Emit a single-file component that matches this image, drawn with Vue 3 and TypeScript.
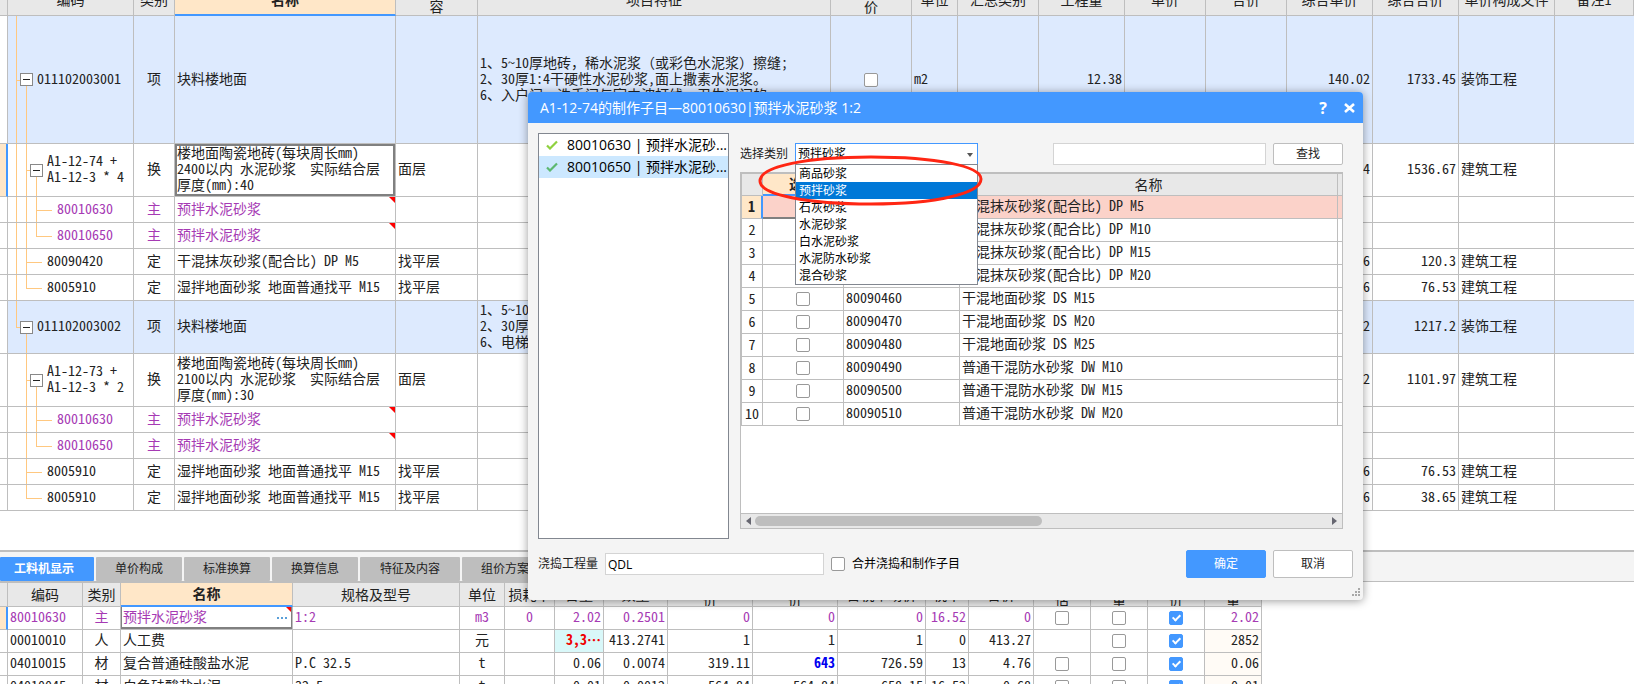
<script setup lang="ts">
import { ref } from 'vue'

type Node = 'branch' | 'leaf'

interface Item {
  level: number
  node: Node
  last?: boolean
  through: number[]
  size: 'xl' | 'lg' | 'sm'
  code: string
  kind: string
  name: string
  work?: string
  feature?: string
  bid?: boolean
  unit?: string
  qty?: string
  price?: string
  total?: string
  file?: string
  main?: boolean
  current?: boolean
}

const itemCols: number[] = [8, 126, 41, 221, 82, 353, 81, 46, 81, 86, 81, 81, 86, 86, 96]
const itemHeads: string[] = [
  '', '编码', '类别', '名称', '工作内\n容', '项目特征', '不计\n价', '单位', '汇总类别',
  '工程量', '单价', '合价', '综合单价', '综合合价', '单价构成文件', '备注1',
]

const items: Item[] = [
  {
    level: 0, node: 'branch', through: [], size: 'xl', code: '011102003001', kind: '项', name: '块料楼地面',
    feature: '1、5~10厚地砖，稀水泥浆（或彩色水泥浆）擦缝;\n2、30厚1:4干硬性水泥砂浆,面上撒素水泥浆。\n6、入户门、洗手间与室内波打线、卫生间门的',
    bid: true, unit: 'm2', qty: '12.38', price: '140.02', total: '1733.45', file: '装饰工程',
  },
  {
    level: 1, node: 'branch', through: [0], size: 'lg', code: 'A1-12-74 +\nA1-12-3 * 4', kind: '换',
    name: '楼地面陶瓷地砖(每块周长mm)\n2400以内 水泥砂浆  实际结合层\n厚度(mm):40', work: '面层',
    price: '4', total: '1536.67', file: '建筑工程', current: true,
  },
  { level: 2, node: 'leaf', through: [0, 1], size: 'sm', code: '80010630', kind: '主', name: '预拌水泥砂浆', main: true },
  { level: 2, node: 'leaf', last: true, through: [0, 1], size: 'sm', code: '80010650', kind: '主', name: '预拌水泥砂浆', main: true },
  { level: 1, node: 'leaf', through: [0], size: 'sm', code: '80090420', kind: '定', name: '干混抹灰砂浆(配合比) DP M5', work: '找平层', price: '6', total: '120.3', file: '建筑工程' },
  { level: 1, node: 'leaf', last: true, through: [0], size: 'sm', code: '8005910', kind: '定', name: '湿拌地面砂浆 地面普通找平 M15', work: '找平层', price: '6', total: '76.53', file: '建筑工程' },
  {
    level: 0, node: 'branch', last: true, through: [], size: 'lg', code: '011102003002', kind: '项', name: '块料楼地面',
    feature: '1、5~10厚地砖\n2、30厚1:4干硬性\n6、电梯厅', price: '2', total: '1217.2', file: '装饰工程',
  },
  {
    level: 1, node: 'branch', through: [], size: 'lg', code: 'A1-12-73 +\nA1-12-3 * 2', kind: '换',
    name: '楼地面陶瓷地砖(每块周长mm)\n2100以内 水泥砂浆  实际结合层\n厚度(mm):30', work: '面层',
    price: '2', total: '1101.97', file: '建筑工程',
  },
  { level: 2, node: 'leaf', through: [1], size: 'sm', code: '80010630', kind: '主', name: '预拌水泥砂浆', main: true },
  { level: 2, node: 'leaf', last: true, through: [1], size: 'sm', code: '80010650', kind: '主', name: '预拌水泥砂浆', main: true },
  { level: 1, node: 'leaf', through: [], size: 'sm', code: '8005910', kind: '定', name: '湿拌地面砂浆 地面普通找平 M15', work: '找平层', price: '6', total: '76.53', file: '建筑工程' },
  { level: 1, node: 'leaf', last: true, through: [], size: 'sm', code: '8005910', kind: '定', name: '湿拌地面砂浆 地面普通找平 M15', work: '找平层', price: '6', total: '38.65', file: '建筑工程' },
]

// Full-width punctuation is kept out of the half-width font feature.
const pieces = (text = ''): string[] => text.split(/([，（）])/)
const isWide = (piece: string): boolean => /^[，（）]$/.test(piece)

const tabs: string[] = ['工料机显示', '单价构成', '标准换算', '换算信息', '特征及内容', '组价方案']
const tab = ref(0)

const resCols: number[] = [8, 75, 38, 172, 167, 45, 50, 49, 64, 85, 85, 88, 43, 65, 57, 57, 57, 57]
const resHeads: string[] = [
  '', '编码', '类别', '名称', '规格及型号', '单位', '损耗率', '含量', '数量', '定额\n价',
  '市场\n价', '含税市场价', '税率', '合价', '暂\n估', '数\n量', '计\n价', '总\n量',
]

interface Resource {
  code: string
  kind: string
  name: string
  spec: string
  unit: string
  loss: string
  nums: string[]
  checks: (boolean | null)[]
  sum: string
}

const resources: Resource[] = [
  { code: '80010630', kind: '主', name: '预拌水泥砂浆', spec: '1:2', unit: 'm3', loss: '0', nums: ['2.02', '0.2501', '0', '0', '0', '16.52', '0'], checks: [false, false, true], sum: '2.02' },
  { code: '00010010', kind: '人', name: '人工费', spec: '', unit: '元', loss: '', nums: ['3,3⋯', '413.2741', '1', '1', '1', '0', '413.27'], checks: [null, false, true], sum: '2852' },
  { code: '04010015', kind: '材', name: '复合普通硅酸盐水泥', spec: 'P.C 32.5', unit: 't', loss: '', nums: ['0.06', '0.0074', '319.11', '643', '726.59', '13', '4.76'], checks: [false, false, true], sum: '0.06' },
  { code: '04010045', kind: '材', name: '白色硅酸盐水泥', spec: '32.5', unit: 't', loss: '', nums: ['0.01', '0.0012', '564.84', '564.84', '658.15', '16.52', '0.68'], checks: [false, false, true], sum: '0.01' },
]

const parts: string[] = ['80010630 | 预拌水泥砂...', '80010650 | 预拌水泥砂...']
const part = ref(1)

const categories: string[] = ['商品砂浆', '预拌砂浆', '石灰砂浆', '水泥砂浆', '白水泥砂浆', '水泥防水砂浆', '混合砂浆']
const category = ref('预拌砂浆')

const pickCols: number[] = [22, 81, 116]
const mortars = [
  ['80090420', '干混抹灰砂浆(配合比) DP M5'],
  ['80090430', '干混抹灰砂浆(配合比) DP M10'],
  ['80090440', '干混抹灰砂浆(配合比) DP M15'],
  ['80090450', '干混抹灰砂浆(配合比) DP M20'],
  ['80090460', '干混地面砂浆 DS M15'],
  ['80090470', '干混地面砂浆 DS M20'],
  ['80090480', '干混地面砂浆 DS M25'],
  ['80090490', '普通干混防水砂浆 DW M10'],
  ['80090500', '普通干混防水砂浆 DW M15'],
  ['80090510', '普通干混防水砂浆 DW M20'],
]
const keyword = ref('')
const quantity = ref('QDL')
const merge = ref(false)
</script>

<template>
  <div class="app">
    <main class="upper">
      <table class="grid items">
        <colgroup>
          <col v-for="(w, i) in itemCols" :key="i" :style="{ width: w + 'px' }" />
          <col />
        </colgroup>
        <thead>
          <tr>
            <th v-for="(h, i) in itemHeads" :key="i" :class="{ picked: i === 3 }">{{ h }}</th>
          </tr>
        </thead>
        <tbody>
          <tr v-for="(r, i) in items" :key="i" :class="[r.size, { section: r.level === 0, main: r.main, current: r.current }]">
            <td class="gutter"></td>
            <td class="tree">
              <span v-for="g in r.through" :key="g" :class="['guide', 'g' + g]"></span>
              <span :class="['guide', 'g' + r.level, { half: r.last }]"></span>
              <span :class="['arm', 'g' + r.level, { short: r.node === 'branch' }]"></span>
              <span v-if="r.node === 'branch'" :class="['guide', 'below', 'g' + (r.level + 1)]"></span>
              <div :class="['entry', r.node + r.level]">
                <button v-if="r.node === 'branch'" class="toggle" type="button" aria-label="折叠"></button>
                <span class="code">{{ r.code }}</span>
              </div>
            </td>
            <td class="mid">{{ r.kind }}</td>
            <td class="name">{{ r.name }}<i v-if="r.main" class="corner"></i></td>
            <td>{{ r.work }}</td>
            <td><span v-for="(p, k) in pieces(r.feature)" :key="k" :class="{ wide: isWide(p) }">{{ p }}</span></td>
            <td class="check"><input v-if="r.bid" type="checkbox" aria-label="不计价" /></td>
            <td>{{ r.unit }}</td>
            <td></td>
            <td class="num">{{ r.qty }}</td>
            <td></td>
            <td></td>
            <td class="num">{{ r.price }}</td>
            <td class="num">{{ r.total }}</td>
            <td>{{ r.file }}</td>
            <td class="end"></td>
          </tr>
        </tbody>
      </table>
    </main>

    <section class="lower">
      <nav class="tabs">
        <button v-for="(t, i) in tabs" :key="t" type="button" :class="{ on: tab === i }" @click="tab = i">{{ t }}</button>
      </nav>
      <table class="grid resources">
        <colgroup>
          <col v-for="(w, i) in resCols" :key="i" :style="{ width: w + 'px' }" />
        </colgroup>
        <thead>
          <tr>
            <th v-for="(h, i) in resHeads" :key="i" :class="{ picked: i === 3 }">{{ h }}</th>
          </tr>
        </thead>
        <tbody>
          <tr v-for="(r, i) in resources" :key="r.code" :class="{ main: i === 0, current: i === 0 }">
            <td class="gutter"></td>
            <td>{{ r.code }}</td>
            <td class="mid">{{ r.kind }}</td>
            <td class="name">
              {{ r.name }}
              <template v-if="i === 0"><i class="corner"></i><button class="more" type="button" aria-label="更多"><i></i><i></i><i></i></button></template>
            </td>
            <td>{{ r.spec }}</td>
            <td class="mid">{{ r.unit }}</td>
            <td class="mid">{{ r.loss }}</td>
            <td v-for="(n, k) in r.nums" :key="k" :class="['num', { over: i === 1 && k === 0, edited: i === 2 && k === 3 }]">{{ n }}</td>
            <td v-for="(c, k) in r.checks" :key="'c' + k" class="check">
              <input v-if="c !== null" type="checkbox" :checked="c" :aria-label="r.name" />
            </td>
            <td :class="['num', { warm: i > 0 }]">{{ r.sum }}</td>
          </tr>
        </tbody>
      </table>
    </section>

    <div class="dialog" role="dialog" aria-labelledby="dialog-title">
      <header>
        <h1 id="dialog-title">A1-12-74的制作子目—80010630|预拌水泥砂浆 1:2</h1>
        <button type="button" class="help" aria-label="帮助">?</button>
        <button type="button" class="close" aria-label="关闭">
          <svg width="11" height="10" viewBox="0 0 11 10"><path d="M1 1L10 9M10 1L1 9" stroke="#fff" stroke-width="2.6" /></svg>
        </button>
      </header>

      <div class="body">
        <ul class="parts">
          <li v-for="(p, i) in parts" :key="p" :class="{ on: part === i }" @click="part = i">
            <svg width="12" height="10" viewBox="0 0 12 10"><path d="M1 5.5L4 8.5L11 1.5" fill="none" :stroke="i === 0 ? '#8fd13f' : '#5cb870'" stroke-width="2.2" /></svg>
            <span>{{ p }}</span>
          </li>
        </ul>

        <div class="right">
          <div class="toolbar">
            <label for="category">选择类别</label>
            <div class="combo">
              <select id="category" v-model="category">
                <option v-for="c in categories" :key="c">{{ c }}</option>
              </select>
              <svg class="caret" width="6" height="4" viewBox="0 0 6 4"><path d="M0 0H6L3 4Z" fill="#555" /></svg>
              <ul class="menu">
                <li v-for="c in categories" :key="c" :class="{ on: c === category }" @click="category = c">{{ c }}</li>
              </ul>
              <svg class="ring" width="226" height="52" viewBox="0 0 226 52">
                <path d="M2 27C2 12 50 3 113 3C178 3 223 12 223 25C223 39 180 50 113 50C50 50 2 41 2 27Z" fill="none" stroke="#ff2613" stroke-width="3" />
              </svg>
            </div>
            <input v-model="keyword" type="text" class="search" aria-label="查找内容" />
            <button type="button" class="find">查找</button>
          </div>

          <div class="picker">
            <div class="rows">
              <table class="grid">
                <colgroup>
                  <col v-for="(w, i) in pickCols" :key="i" :style="{ width: w + 'px' }" />
                  <col />
                  <col class="sliver" />
                </colgroup>
                <thead>
                  <tr><th></th><th class="picked">选择</th><th>编码</th><th>名称</th><th class="end"></th></tr>
                </thead>
                <tbody>
                  <tr v-for="(m, i) in mortars" :key="m[0]" :class="{ chosen: i === 0 }">
                    <th scope="row">{{ i + 1 }}</th>
                    <td class="check"><input type="checkbox" :aria-label="m[1]" /></td>
                    <td>{{ m[0] }}</td>
                    <td>{{ m[1] }}</td>
                    <td class="end"></td>
                  </tr>
                </tbody>
              </table>
            </div>
            <div class="scroll">
              <svg width="5" height="8" viewBox="0 0 5 8"><path d="M5 0V8L0 4Z" fill="#666670" /></svg>
              <div class="track"><div class="thumb"></div></div>
              <svg width="5" height="8" viewBox="0 0 5 8"><path d="M0 0V8L5 4Z" fill="#666670" /></svg>
            </div>
          </div>
        </div>
      </div>

      <footer>
        <label for="quantity">浇捣工程量</label>
        <input id="quantity" v-model="quantity" type="text" class="quantity" />
        <input id="merge" v-model="merge" type="checkbox" />
        <label for="merge" class="dark">合并浇捣和制作子目</label>
        <div class="actions">
          <button type="button" class="primary">确定</button>
          <button type="button">取消</button>
        </div>
      </footer>
      <svg class="grip" width="8" height="8" viewBox="0 0 8 8" fill="#a8a8a8">
        <path d="M6 0h2v2h-2zM3 3h2v2h-2zM6 3h2v2h-2zM0 6h2v2h-2zM3 6h2v2h-2zM6 6h2v2h-2z" />
      </svg>
    </div>
  </div>
</template>

<style>
body {
  margin: 0;
  background: #fff;
}
</style>

<style scoped>
.app {
  position: relative;
  display: flex;
  flex-direction: column;
  height: 100vh;
  overflow: hidden;
  color: #222;
  font: 12px/16px "Open Sans", "Noto Sans CJK SC", sans-serif;
}
button,
input,
select {
  box-sizing: border-box;
  margin: 0;
  padding: 0;
  font: inherit;
  color: inherit;
}
ul {
  margin: 0;
  padding: 0;
  list-style: none;
}

/* data grids */
.grid {
  table-layout: fixed;
  border-collapse: separate;
  border-spacing: 0;
  font: 14px/16px "Noto Sans CJK SC", sans-serif;
  font-feature-settings: "hwid";
}
.grid th,
.grid td {
  position: relative;
  box-sizing: border-box;
  height: 23px;
  padding: 0 2px 4px;
  border: 0 solid #bebebe;
  border-width: 0 1px 1px 0;
  text-align: left;
  vertical-align: middle;
  white-space: pre;
  overflow: hidden;
}
.grid th {
  padding: 0 0 2px;
  background: #e8e8e8;
  font-weight: 400;
  line-height: 14px;
  text-align: center;
}
.grid th.picked {
  background: #ffe7c8;
  border-bottom: 2px solid #4398ff;
  font-weight: 700;
}
.grid .mid {
  text-align: center;
}
.grid .num {
  text-align: right;
}
.grid .end {
  border-right-width: 0;
}
.grid .wide {
  font-feature-settings: normal;
}
.grid tr.main {
  color: #a63ab4;
}
.grid td.gutter,
.grid td.check,
.grid td.tree {
  padding: 0;
}
.grid .current .gutter {
  background: #ffe7c8;
  border-right: 2px solid #4398ff;
}
.corner {
  position: absolute;
  top: 0;
  right: 0;
  border: 3px solid #f00;
  border-left-color: transparent;
  border-bottom-color: transparent;
}

input[type="checkbox"] {
  appearance: none;
  position: relative;
  width: 14px;
  height: 14px;
  border: 1px solid #999;
  border-radius: 2px;
  background: #fff;
}
.check {
  white-space: normal;
}
.check input[type="checkbox"] {
  display: block;
  margin: 0 auto;
}
input[type="checkbox"]:checked {
  border-color: #4398ff;
  background: #4398ff;
}
input[type="checkbox"]:checked::after {
  content: "";
  position: absolute;
  left: 4px;
  top: 1px;
  width: 3px;
  height: 6px;
  border: solid #fff;
  border-width: 0 2px 2px 0;
  transform: rotate(45deg);
}

/* bill items */
.upper {
  flex: 1;
  min-height: 0;
  overflow: hidden;
}
.items {
  width: 100%;
  margin-top: -15px;
}
.items th {
  height: 31px;
}
.items .xl td {
  height: 128px;
}
.items .lg td {
  height: 53px;
}
.items .sm td {
  height: 26px;
}
.items .section td:not(.gutter) {
  background: #ddeafe;
}
.items .current .name::after {
  content: "";
  position: absolute;
  inset: 0;
  border: 2px solid #808080;
}
.guide {
  position: absolute;
  top: 0;
  bottom: 0;
  width: 1px;
  background: #ffc880;
}
.guide.half {
  bottom: 50%;
}
.guide.below {
  top: 50%;
}
.arm {
  position: absolute;
  top: 50%;
  width: 16px;
  height: 1px;
  background: #ffc880;
}
.arm.short {
  width: 5px;
}
.g0 {
  left: 8px;
}
.g1 {
  left: 18px;
}
.g2 {
  left: 28px;
}
.entry {
  position: relative;
  display: flex;
  align-items: center;
  gap: 4px;
}
.code {
  padding-bottom: 4px;
}
.branch0 {
  padding-left: 12px;
}
.branch1 {
  padding-left: 22px;
}
.leaf1 {
  padding-left: 39px;
}
.leaf2 {
  padding-left: 49px;
}
.toggle {
  display: flex;
  align-items: center;
  justify-content: center;
  width: 13px;
  height: 13px;
  border: 1px solid #888;
  background: #fff;
}
.toggle::before {
  content: "";
  width: 7px;
  height: 1px;
  background: #222;
}

/* resource panel */
.lower {
  flex: 0 0 132px;
  overflow: hidden;
  border-top: 2px solid #bebebe;
}
.tabs {
  display: flex;
  gap: 2px;
  padding-top: 5px;
  background: #f4f4f4;
  border-bottom: 1px solid #bebebe;
}
.tabs button {
  height: 24px;
  padding: 0 19px;
  border: 0;
  border-radius: 1px;
  background: #bebebe;
}
.tabs button:nth-child(5) {
  padding: 0 20px;
}
.tabs button.on {
  padding: 0 20px 0 14px;
  background: #4398ff;
  color: #fff;
  font-weight: 700;
}
.resources {
  width: 1px;
}
.resources thead th {
  height: 24px;
  padding-bottom: 1px;
  border-top: 1px solid #bebebe;
  line-height: 11px;
}
.resources .current .name::after {
  content: "";
  position: absolute;
  inset: 0;
  border: solid #808080;
  border-width: 0 1px 2px 1px;
}
.more {
  position: absolute;
  right: 4px;
  top: 9px;
  display: flex;
  gap: 2px;
  padding: 1px;
  border: 0;
  background: none;
}
.more i {
  width: 2px;
  height: 2px;
  background: #5a9fd8;
}
.grid td.over {
  background: #d9f8f9;
  color: #f00000;
  font-weight: 700;
}
.grid td.edited {
  color: #0000f0;
  font-weight: 700;
}
.grid td.warm {
  background: #fffbf6;
}

/* dialog window */
.dialog {
  position: absolute;
  left: 528px;
  top: 92px;
  display: flex;
  flex-direction: column;
  width: 835px;
  border-radius: 4px;
  background: #f4f4f4;
  box-shadow: 0 1px 10px rgba(0, 0, 0, 0.4);
}
.dialog header {
  display: flex;
  align-items: center;
  height: 31px;
  padding: 0 6px 0 12px;
  border-radius: 4px 4px 0 0;
  background: #4398ff;
  color: #fff;
}
.dialog h1 {
  flex: 1;
  margin: 0;
  font-size: 14px;
  line-height: 20px;
  font-weight: 400;
}
.dialog header button {
  display: flex;
  align-items: center;
  justify-content: center;
  width: 16px;
  height: 20px;
  border: 0;
  background: none;
}
.dialog header .help {
  margin-right: 10px;
  font-size: 16px;
  font-weight: 700;
}
.body {
  display: flex;
  gap: 11px;
  padding: 10px 20px 0 10px;
}
.parts {
  box-sizing: border-box;
  width: 191px;
  height: 406px;
  border: 1px solid #828790;
  background: #fff;
  color: #000;
  font-size: 14px;
}
.parts li {
  display: flex;
  align-items: center;
  gap: 9px;
  height: 22px;
  padding-left: 7px;
  line-height: 22px;
  white-space: nowrap;
}
.parts li.on {
  background: #cce8ff;
}
.right {
  flex: 1;
  display: flex;
  flex-direction: column;
  gap: 7px;
  min-width: 0;
  padding: 10px 0;
}
.toolbar {
  display: flex;
  align-items: center;
  gap: 7px;
}
.combo {
  position: relative;
  width: 183px;
  height: 22px;
  margin-right: auto;
  color: #000;
}
.combo select {
  display: block;
  width: 100%;
  height: 22px;
  padding: 0 2px;
  border: 1px solid #4398ff;
  border-radius: 0;
  background: #fff;
  appearance: none;
}
.caret {
  position: absolute;
  right: 5px;
  top: 10px;
}
.menu {
  position: absolute;
  z-index: 2;
  left: 0;
  right: 0;
  top: 21px;
  border: 1px solid #828790;
  background: #fff;
}
.menu li {
  height: 17px;
  padding-left: 3px;
  line-height: 17px;
}
.menu li.on {
  background: #0078d7;
  color: #fff;
}
.ring {
  position: absolute;
  z-index: 3;
  left: -37px;
  top: 11px;
  pointer-events: none;
}
.search,
.quantity {
  height: 22px;
  padding: 0 2px;
  border: 1px solid #d4d4d4;
  background: #fff;
  color: #000;
}
.search {
  width: 213px;
}
.quantity {
  width: 219px;
}
.find,
.actions button {
  border: 1px solid #bebebe;
  border-radius: 2px;
  background: #fff;
}
.find {
  width: 70px;
  height: 22px;
}
.picker {
  flex: 1;
  display: flex;
  flex-direction: column;
  border: 1px solid #bebebe;
  border-top-width: 2px;
  background: #fff;
}
.rows {
  flex: 1;
}
.rows .grid {
  width: 100%;
}
.rows thead th {
  height: 22px;
}
.rows .sliver {
  width: 4px;
}
.rows thead th:first-child,
.rows tbody th {
  border-left: 1px solid #bebebe;
}
.rows tbody th {
  background: #fff;
}
.rows .end {
  padding: 0;
}
.rows .chosen th {
  background: #ffe7c8;
  font-weight: 700;
  border-right: 2px solid #4398ff;
}
.rows .chosen td {
  background: #fbd2c9;
}
.rows .chosen .check {
  border-bottom: 2px solid #808080;
}
.scroll {
  display: flex;
  align-items: center;
  justify-content: space-between;
  height: 14px;
  padding: 0 5px;
  border-top: 1px solid #bebebe;
  background: #e8e8e8;
}
.track {
  flex: 1;
  margin: 0 4px;
}
.thumb {
  width: 50%;
  height: 10px;
  border-radius: 5px;
  background: #bebebe;
}
.dialog footer {
  display: flex;
  align-items: center;
  gap: 7px;
  padding: 11px 10px 22px;
}
.dark {
  color: #000;
}
.actions {
  display: flex;
  gap: 7px;
  margin-left: auto;
}
.actions button {
  width: 80px;
  height: 28px;
}
.actions .primary {
  border-color: #4398ff;
  background: #4398ff;
  color: #fff;
}
.grip {
  position: absolute;
  right: 3px;
  bottom: 4px;
}
</style>
